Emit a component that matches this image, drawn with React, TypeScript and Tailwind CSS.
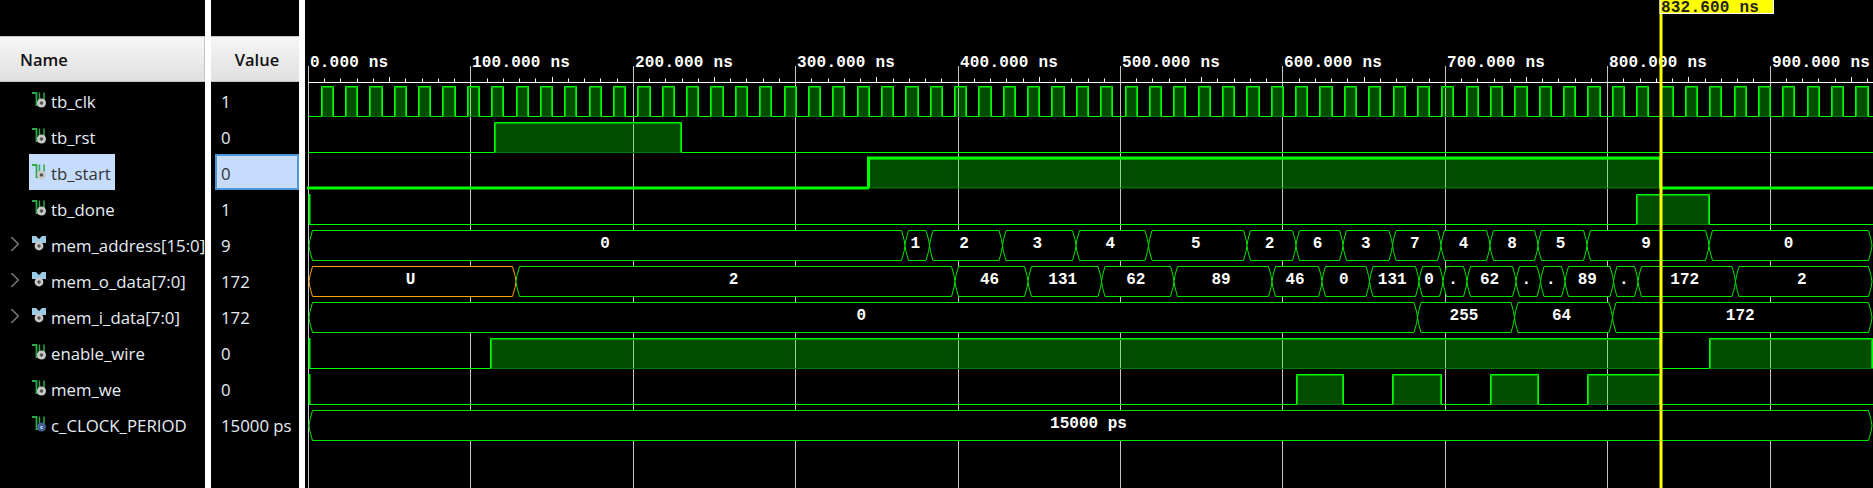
import React from 'react';
import { ChevronRight } from 'lucide-react';

type Kind = 'bit' | 'bus' | 'const';

interface Signal {
  name: string;
  value: string;
  kind: Kind;
  selected?: boolean;
}

const signals: Signal[] = [
  { name: 'tb_clk', value: '1', kind: 'bit' },
  { name: 'tb_rst', value: '0', kind: 'bit' },
  { name: 'tb_start', value: '0', kind: 'bit', selected: true },
  { name: 'tb_done', value: '1', kind: 'bit' },
  { name: 'mem_address[15:0]', value: '9', kind: 'bus' },
  { name: 'mem_o_data[7:0]', value: '172', kind: 'bus' },
  { name: 'mem_i_data[7:0]', value: '172', kind: 'bus' },
  { name: 'enable_wire', value: '0', kind: 'bit' },
  { name: 'mem_we', value: '0', kind: 'bit' },
  { name: 'c_CLOCK_PERIOD', value: '15000 ps', kind: 'const' },
];

const BRIGHT = '#00ff00';
const LINE = '#00e600';
const T0 = 308.5;
const PX_PER_NS = 1.624;
const END = 1873;
const CURSOR = 1660.5;

const SignalIcon = ({ kind }: { kind: Kind }) => {
  if (kind === 'bus') {
    return (
      <svg width="16" height="18" viewBox="0 0 16 18" className="shrink-0">
        <path d="M1 1h4l3 3 3-3h4v7h-3l-4 2-4-2H1z" fill="#9ccbe6" />
        <circle cx="8" cy="11" r="4.4" fill="#c9c9c9" />
        <circle cx="8" cy="11" r="1.7" fill="#555" />
      </svg>
    );
  }
  return (
    <svg width="16" height="18" viewBox="0 0 16 18" className="shrink-0">
      <path d="M1 2h4.5v12h1.5" fill="none" stroke="#2fa84a" strokeWidth="1.8" />
      <path d="M8.5 1.500v9M13 1.500v9" fill="none" stroke="#2fa84a" strokeWidth="1.5" />
      {kind === 'bit' ? (
        <>
          <circle cx="10.500" cy="12" r="4.500" fill="#c9c9c9" />
          <circle cx="10.500" cy="12" r="1.800" fill="#555" />
        </>
      ) : (
        <>
          <circle cx="10.500" cy="12" r="4.500" fill="#3f5f95" />
          <text x="10.500" y="14" fontSize="6" fill="#e8eefc" textAnchor="middle" fontWeight="700">
            c
          </text>
        </>
      )}
    </svg>
  );
};

const HeaderCell = ({ label, className }: { label: string; className: string }) => (
  <div
    className={`h-[46px] flex items-center border-y border-r border-[#c4c4c4] bg-gradient-to-b from-[#f6f6f6] to-[#e0e0e0] pt-[2px] text-[16.5px] font-semibold text-[#111] ${className}`}
  >
    {label}
  </div>
);

// x is where the level rises, to is where it falls, drawn with a dark underside like the viewer does
const Pulse = ({ x, to, top, thick }: { x: number; to: number; top: number; thick?: boolean }) => {
  const bottom = top + 30;
  return (
    <g>
      <rect x={x} y={top} width={to - x} height={30} fill={BRIGHT} fillOpacity={0.3} />
      <path d={`M${x + 1} ${top + 1}V${bottom}M${to - 1} ${top + 1}V${bottom}`} stroke="#00c800" strokeWidth="1" />
      <path d={`M${x + 1} ${top + 1}H${to - 1}`} stroke="#00a000" strokeWidth="1" />
      <path d={`M${x} ${bottom}H${to}`} stroke="#087c08" strokeWidth="1" />
      <path d={`M${x} ${bottom}V${top}H${to}V${bottom}`} fill="none" stroke={BRIGHT} strokeWidth={thick ? 3 : 1} />
    </g>
  );
};

const Low = ({ from, to, top, thick }: { from: number; to: number; top: number; thick?: boolean }) => (
  <path d={`M${from} ${top + 30}H${to}`} stroke={BRIGHT} strokeWidth={thick ? 3 : 1} />
);

interface BusSeg {
  to: number;
  label: string;
  color?: string;
}

const Bus = ({ top, from, segs }: { top: number; from: number; segs: BusSeg[] }) => {
  const bottom = top + 30;
  const mid = top + 15;
  let start = from;
  return (
    <g>
      {segs.map((seg, i) => {
        const x0 = start;
        start = seg.to;
        const color = seg.color ?? LINE;
        const d = `M${x0} ${mid}L${x0 + 1} ${top + 9}L${x0 + 3.5} ${top}H${seg.to - 3.5}L${seg.to - 1} ${top + 9}L${seg.to} ${mid}L${seg.to - 1} ${bottom - 9}L${seg.to - 3.5} ${bottom}H${x0 + 3.5}L${x0 + 1} ${bottom - 9}Z`;
        return (
          <g key={i}>
            <path d={d} fill="#000" stroke={color} strokeWidth="1" />
            <text x={(x0 + seg.to) / 2 - 2} y={top + 17.5} textAnchor="middle" fill="#fff">
              {seg.label}
            </text>
          </g>
        );
      })}
    </g>
  );
};

const clockPulses = () => {
  const out: number[][] = [];
  for (let k = 0; k < 70; k++) {
    const rise = Math.round(T0 + (7.5 + 15 * k) * PX_PER_NS) + 0.5;
    const fall = Math.round(T0 + (15 + 15 * k) * PX_PER_NS) + 0.5;
    if (rise < END) out.push([rise, Math.min(fall, END + 2)]);
  }
  return out;
};

const Waveform = () => {
  const majors = [0, 100, 200, 300, 400, 500, 600, 700, 800, 900];
  const gridX = (ns: number) => Math.round(T0 + ns * PX_PER_NS - 0.5) + 0.5;
  const ticks: number[] = [];
  for (let ns = 10; ns < 970; ns += 10) if (ns % 100 !== 0) ticks.push(ns);

  return (
    <svg
      width="1568"
      height="488"
      viewBox="305 0 1568 488"
      className="block font-['Liberation_Mono',monospace] text-[16px] font-bold"
    >
      {/* grid and ruler */}
      {majors.map((ns) => (
        <path key={ns} d={`M${gridX(ns)} 66V488`} stroke="#c4c4c4" strokeWidth="1" />
      ))}
      <path d={`M308 82.5H${END}`} stroke="#fff" strokeWidth="1" />
      {ticks.map((ns) => (
        <path key={ns} d={`M${gridX(ns)} 82V${ns % 50 === 0 ? 77 : 78.5}`} stroke="#fff" strokeWidth="1" />
      ))}
      {majors.map((ns) => (
        <text key={ns} x={gridX(ns) + 1.5} y="66.5" fill="#fff" letterSpacing="0.2">
          {ns}.000 ns
        </text>
      ))}

      {/* tb_clk */}
      <Low from={308} to={END} top={86.5} />
      {clockPulses().map(([a, b]) => (
        <Pulse key={a} x={a} to={b} top={86.5} />
      ))}

      {/* tb_rst */}
      <Low from={308} to={END} top={122.5} />
      <Pulse x={494.5} to={681.5} top={122.5} />

      {/* tb_start */}
      <Low from={307} to={869} top={158} thick />
      <Pulse x={868.5} to={CURSOR} top={158} thick />
      <Low from={CURSOR} to={END} top={158} thick />

      {/* tb_done */}
      <path d="M309.5 194V224" stroke={BRIGHT} strokeWidth="2" />
      <Low from={309} to={END} top={194.5} />
      <Pulse x={1636.5} to={1709.5} top={194.5} />

      <Bus
        top={230.5}
        from={309}
        segs={[
          { to: 905, label: '0' },
          { to: 929.5, label: '1' },
          { to: 1002.5, label: '2' },
          { to: 1076, label: '3' },
          { to: 1148.5, label: '4' },
          { to: 1247, label: '5' },
          { to: 1296, label: '2' },
          { to: 1343, label: '6' },
          { to: 1392.5, label: '3' },
          { to: 1441, label: '7' },
          { to: 1490, label: '4' },
          { to: 1538, label: '8' },
          { to: 1587, label: '5' },
          { to: 1709, label: '9' },
          { to: 1872, label: '0' },
        ]}
      />
      <Bus
        top={266.5}
        from={309}
        segs={[
          { to: 516, label: 'U', color: '#ffa500' },
          { to: 955, label: '2' },
          { to: 1028, label: '46' },
          { to: 1101.5, label: '131' },
          { to: 1174, label: '62' },
          { to: 1272, label: '89' },
          { to: 1322, label: '46' },
          { to: 1369.5, label: '0' },
          { to: 1419, label: '131' },
          { to: 1443, label: '0' },
          { to: 1467, label: '.' },
          { to: 1516, label: '62' },
          { to: 1540.5, label: '.' },
          { to: 1565, label: '.' },
          { to: 1613.5, label: '89' },
          { to: 1638, label: '.' },
          { to: 1735.5, label: '172' },
          { to: 1872, label: '2' },
        ]}
      />
      <Bus
        top={302.5}
        from={309}
        segs={[
          { to: 1417.5, label: '0' },
          { to: 1514.5, label: '255' },
          { to: 1612.5, label: '64' },
          { to: 1872, label: '172' },
        ]}
      />

      {/* enable_wire */}
      <path d="M309.5 338V368" stroke={BRIGHT} strokeWidth="2" />
      <Low from={309} to={491} top={338.5} />
      <Pulse x={490.5} to={CURSOR} top={338.5} />
      <Low from={CURSOR} to={1709} top={338.5} />
      <Pulse x={1709.5} to={1872.5} top={338.5} />

      {/* mem_we */}
      <path d="M309.5 374V404" stroke={BRIGHT} strokeWidth="2" />
      <Low from={309} to={END} top={374.5} />
      <Pulse x={1296.5} to={1343.5} top={374.5} />
      <Pulse x={1392.5} to={1441.5} top={374.5} />
      <Pulse x={1490.5} to={1538.5} top={374.5} />
      <Pulse x={1587.5} to={CURSOR} top={374.5} />

      <Bus top={410.5} from={309} segs={[{ to: 1872, label: '15000 ps' }]} />

      {/* cursor */}
      <rect x="1659.5" y="0" width="3" height="488" fill="#ffff00" />
      <rect x="1660" y="-1" width="113.5" height="14.5" fill="#ffff00" stroke="#fff" strokeWidth="1" />
      <text x="1661" y="12" fill="#222" letterSpacing="0.2">
        832.600 ns
      </text>
    </svg>
  );
};

const App: React.FC = () => {
  return (
    <main className="flex h-[488px] w-[1873px] overflow-hidden bg-black font-['Open_Sans','Noto_Sans',sans-serif]">
      {/* name column */}
      <div className="w-[205px] pt-9">
        <HeaderCell label="Name" className="pl-5" />
        {signals.map((s) => (
          <div key={s.name} className="flex h-9 items-center text-[16.8px] text-[#e6edf5]">
            <div className="flex w-[29px] shrink-0 justify-end pr-[1px]">
              {s.kind === 'bus' && <ChevronRight size={26} strokeWidth={1.4} className="text-[#7a7a7a]" />}
            </div>
            <div className={`flex h-9 items-center whitespace-nowrap pl-[2px] pr-1 ${s.selected ? 'bg-[#c6dcfc] text-[#333]' : ''}`}>
              <SignalIcon kind={s.kind} />
              <span className="ml-[4px] pt-[3px]">{s.name}</span>
            </div>
          </div>
        ))}
      </div>
      <div className="w-[6px] bg-white" />
      {/* value column */}
      <div className="w-[88px] pt-9">
        <HeaderCell label="Value" className="justify-center pl-1 border-r-0" />
        {signals.map((s) => (
          <div
            key={s.name}
            className={`flex h-9 items-center whitespace-nowrap pt-[3px] text-[16.8px] ${
              s.selected
                ? 'ml-1 border-2 border-[#4a96d6] bg-[#c6dcfc] pl-1 text-[#333]'
                : 'pl-[10px] text-[#e6edf5]'
            }`}
          >
            {s.value}
          </div>
        ))}
      </div>
      <div className="w-[6px] bg-white" />
      <Waveform />
    </main>
  );
};

export default App;
